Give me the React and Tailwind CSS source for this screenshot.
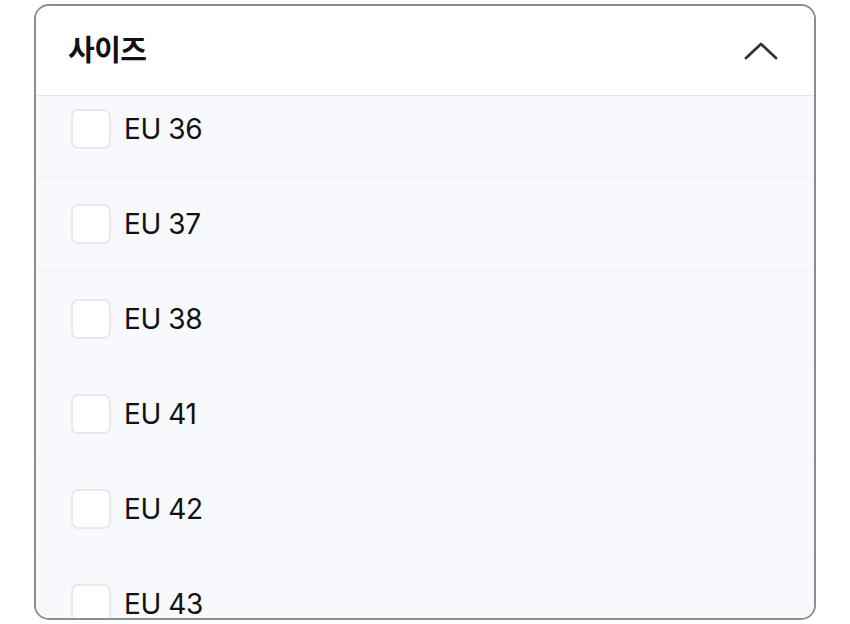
import React from "react";

const SIZES = ["EU 36", "EU 37", "EU 38", "EU 41", "EU 42", "EU 43", "EU 44"];

const ChevronUp = () => (
  <svg width="34" height="20" viewBox="0 0 34 20" fill="none">
    <path
      d="M2 17 L17 3 L32 17"
      stroke="#333333"
      strokeWidth="2.8"
      strokeLinecap="round"
      strokeLinejoin="round"
    />
  </svg>
);

const SizeRow = ({ label }) => (
  <label className="flex items-center h-[95px] px-[35px] border-b border-[#f0f2f5] shrink-0">
    <span className="w-[40px] h-[40px] rounded-[7px] bg-white border-2 border-[#e9e9ec]" />
    <span className="ml-[13px] text-[28px] font-normal text-[#111] tracking-[-0.4px]">{label}</span>
  </label>
);

export default function App() {
  return (
    <div
      className="min-h-screen bg-white pt-[4px] pl-[34px]"
      style={{ fontFamily: "Inter, 'Noto Sans CJK KR', sans-serif" }}
    >
      <div className="w-[782px] h-[616px] border-2 border-[#8d8d8d] rounded-[15px] overflow-hidden flex flex-col">
        <div className="h-[90px] shrink-0 flex items-center justify-between pl-[32px] pr-[36px] bg-white border-b border-[#e6e8ec]">
          <span className="text-[29px] font-semibold text-[#111] tracking-[-0.5px]">사이즈</span>
          <ChevronUp />
        </div>
        <div className="flex-1 bg-[#f7f9fc] overflow-hidden">
          <div className="flex flex-col mt-[-14px]">
            {SIZES.map(s => (
              <SizeRow key={s} label={s} />
            ))}
          </div>
        </div>
      </div>
    </div>
  );
}
